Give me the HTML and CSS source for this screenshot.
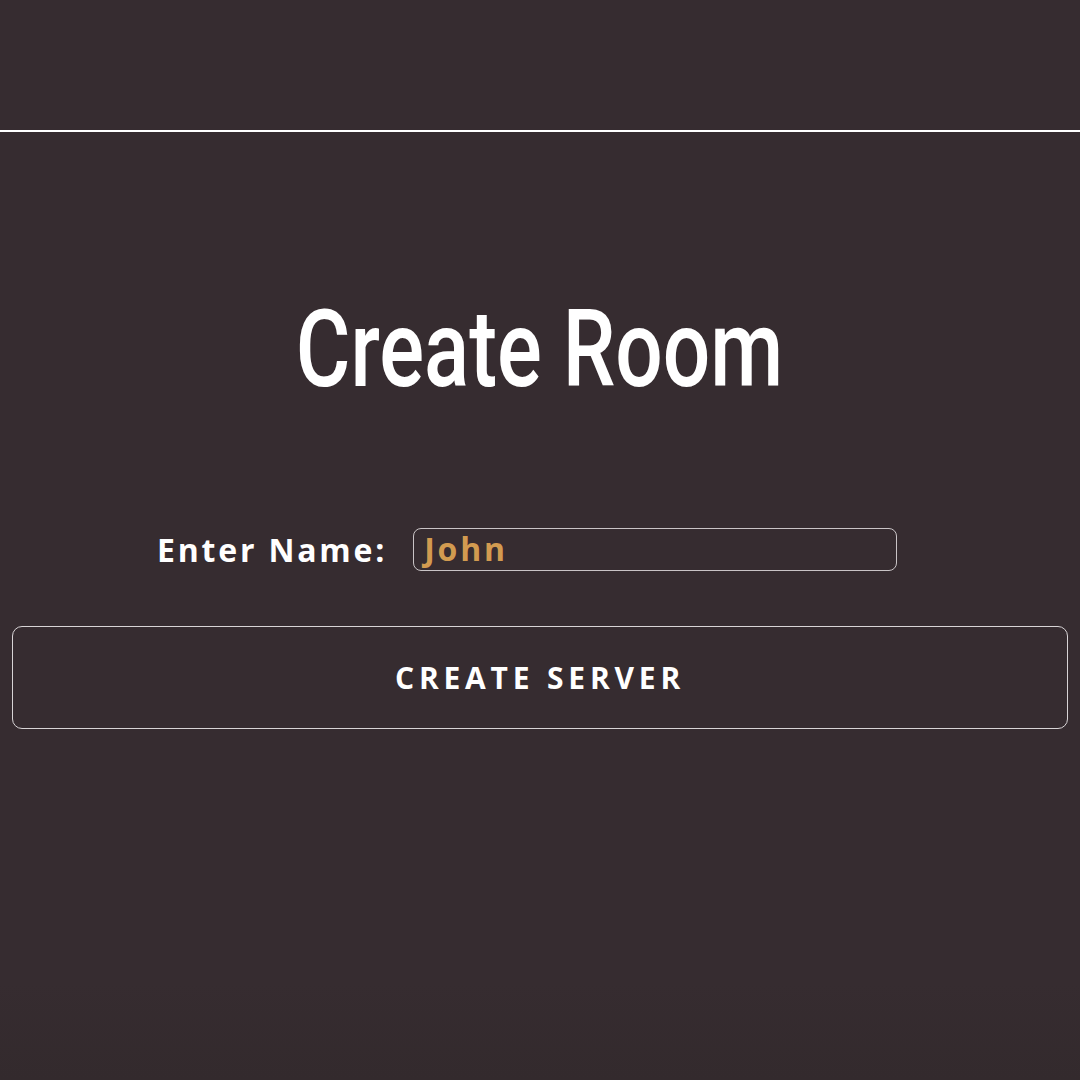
FILE: index.html
```html
<!DOCTYPE html>
<html>
<head>
<meta charset="utf-8">
<link rel="stylesheet" href="styles.css">
</head>
<body>
<header class="topbar"></header>
<main class="content">
  <h1 class="title">Create Room</h1>
  <div class="form-row">
    <label class="label" for="name">Enter Name:</label>
    <div class="input">John</div>
  </div>
  <button class="create-btn">CREATE SERVER</button>
</main>
</body>
</html>
```
FILE: styles.css
```css
html, body {
  margin: 0;
  padding: 0;
}
body {
  width: 1080px;
  height: 1080px;
  background: linear-gradient(to bottom, #362c30 0%, #362c30 91%, #332a2d 100%);
  overflow: hidden;
}
.topbar {
  height: 130px;
  border-bottom: 2px solid #ffffff;
}
.content {
  display: flex;
  flex-direction: column;
  align-items: center;
  padding: 0 12px;
}
.title {
  margin: 167px 0 0 0;
  font-family: Roboto, sans-serif;
  font-weight: 500;
  font-size: 108px;
  line-height: 100px;
  color: #ffffff;
  letter-spacing: 0;
  transform: scaleX(0.775);
  white-space: nowrap;
}
.form-row {
  margin-top: 129px;
  align-self: flex-start;
  margin-left: 145px;
  display: flex;
  align-items: center;
  gap: 26px;
}
.label {
  font-family: "Open Sans", sans-serif;
  font-weight: 700;
  font-size: 32px;
  letter-spacing: 2.8px;
  color: #ffffff;
}
.input {
  width: 484px;
  height: 43px;
  box-sizing: border-box;
  border: 1px solid #c9c4c6;
  border-radius: 8px;
  padding: 0 10px;
  font-family: "Open Sans", sans-serif;
  font-weight: 700;
  font-size: 32px;
  letter-spacing: 2.8px;
  line-height: 40px;
  color: #d29b50;
}
.create-btn {
  margin-top: 55px;
  width: 1056px;
  height: 103px;
  background: transparent;
  border: 1px solid #d8d4d6;
  border-radius: 10px;
  font-family: "Open Sans", sans-serif;
  font-weight: 700;
  font-size: 30px;
  letter-spacing: 4.8px;
  color: #ffffff;
}
```
